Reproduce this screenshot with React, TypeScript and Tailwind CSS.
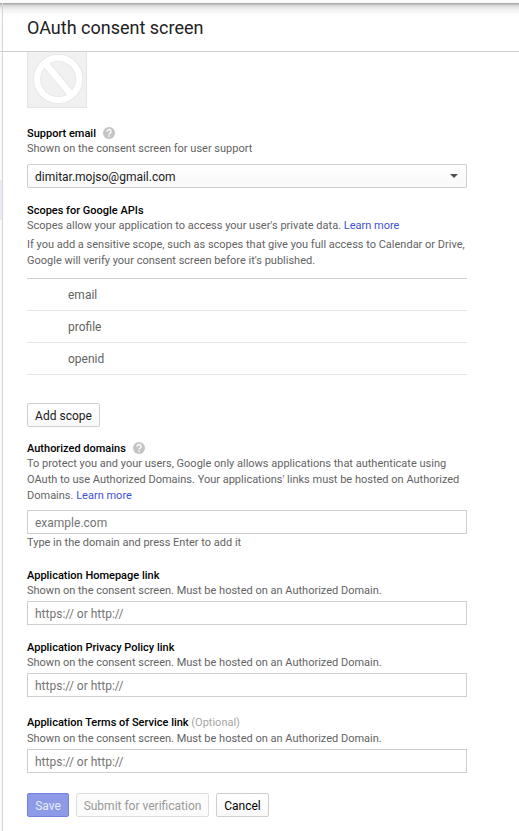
import type { ReactNode } from 'react';

function HelpIcon() {
  return (
    <svg className="-mt-px ml-[7px] size-3 shrink-0" viewBox="0 0 12 12">
      <circle cx="6" cy="6" r="6" fill="#c4c4c4" />
      <path d="M4 4.7a2 2 0 1 1 3 1.6c-.6.4-1 .7-1 1.3" fill="none" stroke="#fff" strokeWidth="1.4" />
      <rect x="5.3" y="8.4" width="1.4" height="1.4" fill="#fff" />
    </svg>
  );
}

function Label({ children, help = false }: { children: ReactNode; help?: boolean }) {
  return (
    <div className="flex h-[15px] items-center font-medium leading-4 text-black">
      <span>{children}</span>
      {help && <HelpIcon />}
    </div>
  );
}

function TextInput({ placeholder, className = '' }: { placeholder: string; className?: string }) {
  return (
    <input
      placeholder={placeholder}
      className={`block h-6 w-[440px] border border-[#cfcfcf] bg-white px-[7px] pt-0.5 text-xs text-[#212121] outline-none placeholder:text-[#757575] ${className}`}
    />
  );
}

function LinkText({ children }: { children: ReactNode }) {
  return <a className="text-[#3f51d5]">{children}</a>;
}

const buttonBase = 'flex h-6 items-center justify-center rounded-[2px] border pt-0.5 text-xs';
const topShadow =
  'bg-[linear-gradient(#aaaaaa_0px,#aeaeae_1px,#d0d0d0_2px,#e3e3e3_4px,#f3f3f3_7px,#fcfcfc_11px,transparent_15px)]';
const hosted = 'Shown on the consent screen. Must be hosted on an Authorized Domain.';

export default function App() {
  return (
    <div className="h-[831px] w-[519px] overflow-hidden bg-white font-[Roboto,'Liberation_Sans',sans-serif] text-[11px] leading-4 text-[#636363]">
      <div className="h-[3px] bg-[#fafafa]" />
      <div className="flex h-[828px]">
        <aside className="w-[3px] shrink-0 border-r border-[#d6d6d6] bg-[#fafafa]">
          <div className={`h-[49px] border-b border-[#cfcfcf] ${topShadow}`} />
          <div className="mt-32 h-10 bg-[#e8eaf6]" />
        </aside>
        <main className="min-w-0 flex-1">
          <header className={`flex h-[49px] items-center border-b border-[#cfcfcf] pt-0.5 pl-6 ${topShadow}`}>
            <h1 className="text-lg text-[#212121]">OAuth consent screen</h1>
          </header>
          <div className="pl-6">
            <div className="flex h-14 w-[60px] items-end border border-t-0 border-[#e4e4e4] bg-[#f1f1f1]">
              <svg className="h-[55px] w-[58px]" viewBox="28 52 58 55" fill="none">
                <g stroke="#e6e6e6">
                  <circle cx="58.2" cy="79" r="21.1" strokeWidth="7.8" />
                  <path d="m44.7 62.8 27 32.4" strokeWidth="8.2" />
                </g>
                <g stroke="#fff">
                  <circle cx="58.2" cy="79" r="21.1" strokeWidth="6.2" />
                  <path d="m44.7 62.8 27 32.4" strokeWidth="6.6" />
                </g>
              </svg>
            </div>

            <section className="pt-[18px]">
              <Label help>Support email</Label>
              <p>Shown on the consent screen for user support</p>
              <div className="mt-[7px] flex h-6 w-[440px] items-center justify-between rounded-[2px] border border-[#cfcfcf] bg-linear-to-b from-white to-[#f8f8f8] pr-2 pl-[7px] text-xs text-[#1a1a1a]">
                <span className="pt-0.5">dimitar.mojso@gmail.com</span>
                <svg width="8" height="4" viewBox="0 0 8 4">
                  <path d="M0 0h8L4 4z" fill="#505050" />
                </svg>
              </div>
            </section>

            <section className="pt-[15px]">
              <Label>Scopes for Google APIs</Label>
              <p>
                Scopes allow your application to access your user's private data. <LinkText>Learn more</LinkText>
              </p>
              <p className="mt-[3px]">
                If you add a sensitive scope, such as scopes that give you full access to Calendar or Drive,
                <br />
                Google will verify your consent screen before it's published.
              </p>
              <ul className="mt-[9px] w-[440px] border-t border-[#cfcfcf] text-xs">
                {['email', 'profile', 'openid'].map((scope) => (
                  <li key={scope} className="flex h-8 items-center border-b border-[#e5e5e5] pl-[41px]">
                    {scope}
                  </li>
                ))}
              </ul>
              <button className={`${buttonBase} mt-7 w-[73px] border-[#cfcfcf] bg-linear-to-b from-white to-[#f8f8f8] text-[#1a1a1a]`}>
                Add scope
              </button>
            </section>

            <section className="pt-[14px]">
              <Label help>Authorized domains</Label>
              <p>
                To protect you and your users, Google only allows applications that authenticate using
                <br />
                OAuth to use Authorized Domains. Your applications' links must be hosted on Authorized
                <br />
                Domains. <LinkText>Learn more</LinkText>
              </p>
              <TextInput placeholder="example.com" className="mt-[6px]" />
              <p className="mt-px">Type in the domain and press Enter to add it</p>
            </section>

            <section className="pt-[17px]">
              <Label>Application Homepage link</Label>
              <p>{hosted}</p>
              <TextInput placeholder="https:// or http://" className="mt-0.5" />
            </section>

            <section className="pt-[15px]">
              <Label>Application Privacy Policy link</Label>
              <p>{hosted}</p>
              <TextInput placeholder="https:// or http://" className="mt-0.5" />
            </section>

            <section className="pt-[18px]">
              <Label>
                Application Terms of Service link <span className="font-normal text-[#a6a6a6]">(Optional)</span>
              </Label>
              <p className="mt-px">{hosted}</p>
              <TextInput placeholder="https:// or http://" className="mt-0.5" />
            </section>

            <div className="mt-5 flex gap-[7px]">
              <button className={`${buttonBase} w-[42px] border-[#7480dd] bg-[#8c9ae8] text-[#e8ebfb]`}>Save</button>
              <button className={`${buttonBase} w-[133px] border-[#dedede] bg-[#fbfbfb] text-[#999999]`}>
                Submit for verification
              </button>
              <button className={`${buttonBase} w-[53px] border-[#cfcfcf] bg-linear-to-b from-white to-[#f8f8f8] text-black`}>
                Cancel
              </button>
            </div>
          </div>
        </main>
      </div>
    </div>
  );
}
